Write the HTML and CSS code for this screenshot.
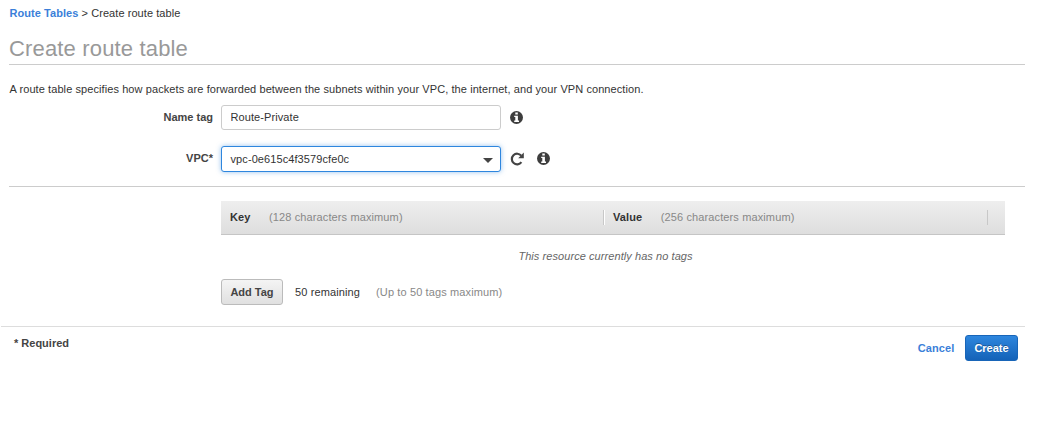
FILE: index.html
```html
<!DOCTYPE html>
<html lang="en">
<head>
<meta charset="utf-8">
<title>Create route table</title>
<link rel="stylesheet" href="styles.css">
</head>
<body>
<svg class="symbols" aria-hidden="true">
  <symbol id="info" viewBox="0 0 13 13">
    <circle cx="6.5" cy="6.5" r="6.5" fill="#3d3d3d"/>
    <path d="M5.3 1.6h2.5v2H5.3zM4.2 4.7h3.7v4.9h1.1v1.4H4.2V9.6h1.1V6.1H4.2z" fill="#fff"/>
  </symbol>
</svg>
<main class="page">
  <nav class="breadcrumb"><a class="crumb-link" href="#">Route Tables</a><span class="crumb-current"> &gt; Create route table</span></nav>
  <h1 class="title">Create route table</h1>
  <p class="description">A route table specifies how packets are forwarded between the subnets within your VPC, the internet, and your VPN connection.</p>
  <form class="form">
    <div class="field">
      <label class="label" for="name">Name tag</label>
      <input class="input" id="name" value="Route-Private">
      <svg class="icon"><use href="#info"/></svg>
    </div>
    <div class="field field-vpc">
      <span class="label">VPC*</span>
      <div class="select"><span class="select-value">vpc-0e615c4f3579cfe0c</span><span class="caret"></span></div>
      <svg class="refresh" viewBox="0 0 14 14"><path d="M11.2 3.6A5.3 5.3 0 1 0 11.4 10.2" fill="none" stroke="#444" stroke-width="2.2"/><path d="M13.8.6v5.6H8.2z" fill="#444"/></svg>
      <svg class="icon"><use href="#info"/></svg>
    </div>
  </form>
  <section class="tags">
    <div class="tags-header">
      <div class="column column-key"><b class="column-name">Key</b><span class="hint">(128 characters maximum)</span></div>
      <div class="column column-value"><b class="column-name">Value</b><span class="hint">(256 characters maximum)</span></div>
      <div class="column column-end"></div>
    </div>
    <p class="empty">This resource currently has no tags</p>
    <div class="tags-actions"><button class="button">Add Tag</button><span class="remaining">50 remaining</span><span class="hint">(Up to 50 tags maximum)</span></div>
  </section>
  <footer class="footer">
    <span class="required">* Required</span>
    <div class="actions"><a class="cancel" href="#">Cancel</a><button class="button primary">Create</button></div>
  </footer>
</main>
</body>
</html>
```
FILE: styles.css
```css
* { box-sizing: border-box; }

body {
  margin: 0;
  background: #fff;
  color: #333;
  font: 11px/16px "Liberation Sans", Arial, sans-serif;
}

a { text-decoration: none; }

.symbols { display: none; }

.page { width: 1025px; padding-top: 5px; }

.breadcrumb { height: 16px; padding-left: 9.5px; letter-spacing: .06px; white-space: pre; }
.crumb-link { color: #3b7fd9; font-weight: bold; }

.title {
  height: 44px;
  margin: 0 0 0 9px;
  padding-top: 15px;
  border-bottom: 1px solid #ccc;
  color: #999;
  font-size: 22px;
  font-weight: normal;
  letter-spacing: .16px;
  line-height: 25px;
}

.description { height: 24px; margin: 16px 0 0 9.5px; letter-spacing: .083px; }

.form { height: 82px; margin-left: 9px; border-bottom: 1px solid #ccc; }

.field { display: flex; align-items: center; height: 25px; }
.field-vpc { height: 26px; margin-top: 16px; }

.label {
  width: 204px;
  margin-right: 8px;
  padding-bottom: 2px;
  color: #444;
  font-weight: bold;
  text-align: right;
}

.input,
.select {
  width: 280px;
  height: 25px;
  padding: 0 9px 2px 8.5px;
  border: 1px solid #ccc;
  border-radius: 3px;
  background: #fff;
  color: #333;
  font: inherit;
  letter-spacing: .09px;
}

.select {
  display: flex;
  align-items: center;
  justify-content: space-between;
  height: 26px;
  padding: 0 7px 0 8.5px;
  border-color: #2e86de;
  box-shadow: 0 0 5px rgba(46, 134, 222, .5);
}

.caret {
  margin-top: 2px;
  border: 5px solid transparent;
  border-top-color: #444;
  border-bottom: 0;
}

.icon { width: 13px; height: 13px; margin-left: 8.5px; }
.refresh { width: 14px; height: 14px; margin: 0 0 1px 9px; }
.refresh + .icon { margin: 0 0 1px 13px; }

.tags { width: 784px; margin: 14px 0 0 221px; }

.tags-header {
  display: flex;
  align-items: center;
  height: 34px;
  border-bottom: 1px solid #c5c5c5;
  background: linear-gradient(#eee, #dedede);
}

.column { height: 15px; padding-left: 9px; line-height: 15px; }
.column-key { width: 382px; }
.column-value { width: 384px; border-left: 1px solid #c8c8c8; box-shadow: inset 1px 0 #fff; }
.column-end { border-left: 1px solid #c8c8c8; }
.column-name { margin-right: 18.5px; letter-spacing: .1px; }
.hint { color: #888; letter-spacing: .12px; }

.empty {
  margin: 13px 0 15px -15px;
  color: #666;
  font-style: italic;
  letter-spacing: .07px;
  text-align: center;
}

.tags-actions { display: flex; align-items: center; height: 26px; }
.remaining { margin: 0 16px 0 12px; letter-spacing: .12px; }

.button {
  width: 62px;
  height: 26px;
  padding: 0;
  border: 1px solid #bbb;
  border-radius: 3px;
  background: linear-gradient(#f4f4f4, #e0e0e0);
  color: #444;
  font: bold 11px/16px "Liberation Sans", Arial, sans-serif;
}

.footer {
  display: flex;
  justify-content: space-between;
  height: 45px;
  margin: 21px 0 0 1px;
  padding: 8px 7px 0 13px;
  border-top: 1px solid #ddd;
}

.required { color: #444; font-weight: bold; }
.actions { display: flex; align-items: center; gap: 10.5px; height: 26px; }
.cancel { color: #3b7fd9; font-weight: bold; letter-spacing: .12px; }

.primary {
  width: 53px;
  border-color: #1865b8;
  background: linear-gradient(#2e86de, #1462b8);
  color: #fff;
  text-shadow: 0 -1px rgba(0, 0, 0, .3);
}
```
